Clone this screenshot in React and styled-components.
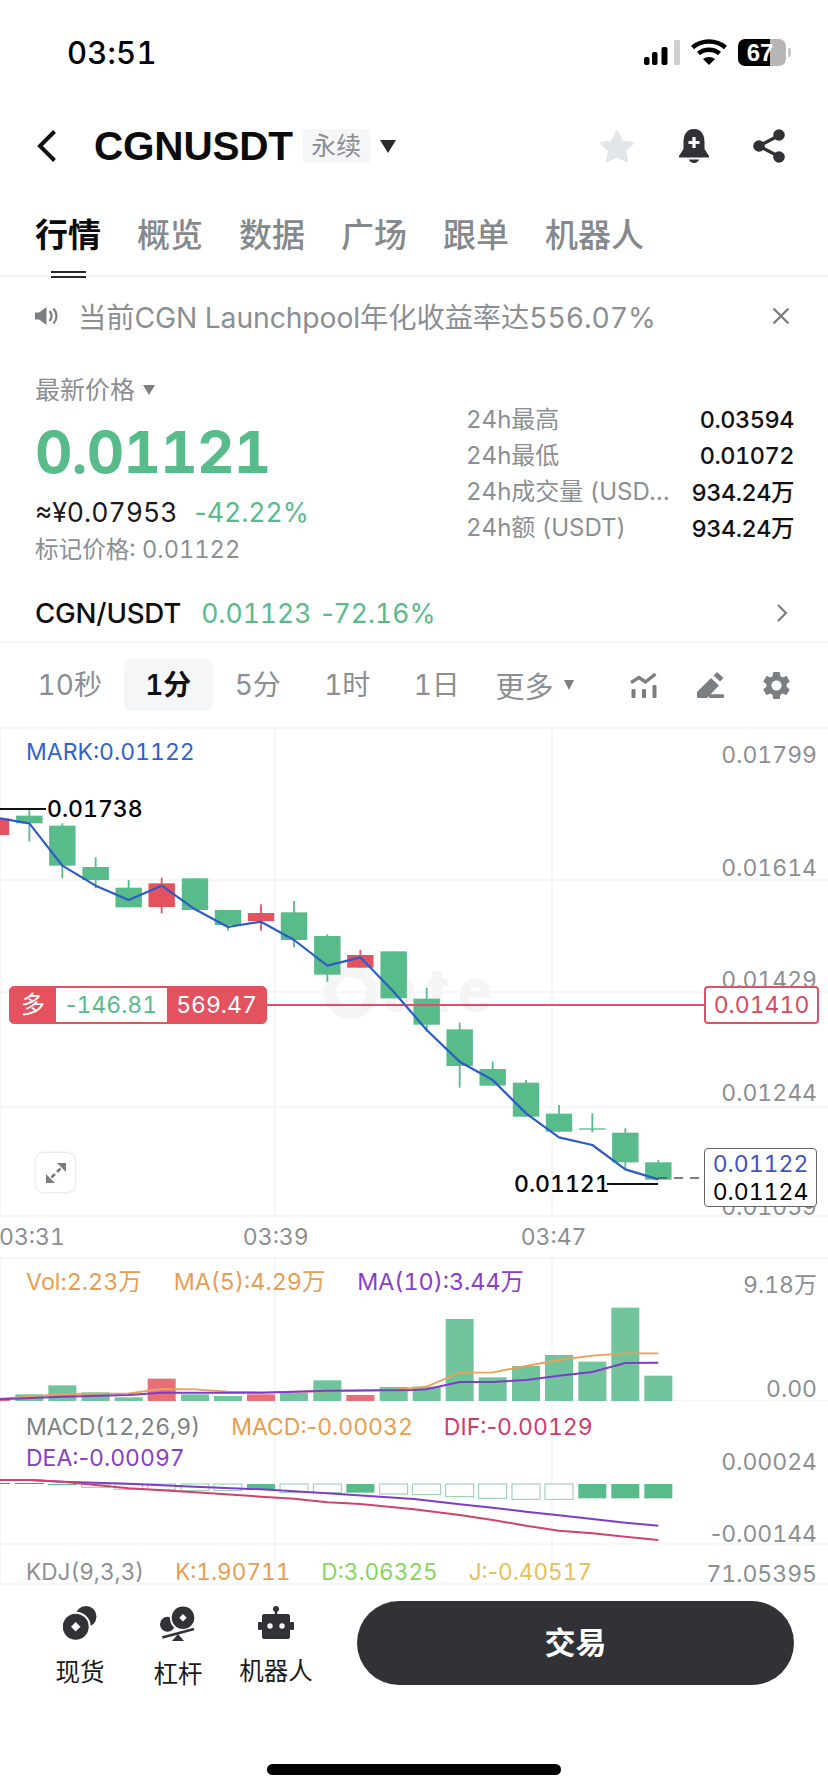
import React from 'react';
import styled, { createGlobalStyle } from 'styled-components';

const GREEN = '#58bb8a';
const RED = '#e5525f';
const BLUE = '#2b5cc9';
const GREY = '#8b8f93';
const ICON = '#7b7f83';
const DARK = '#303236';
const GRID = '#f6f6f6';
const SANS = `Inter, "Noto Sans CJK SC", sans-serif`;
const HELV = `"Liberation Sans", "Noto Sans CJK SC", sans-serif`;

const Global = createGlobalStyle`
  html, body { margin: 0; padding: 0; background: #fff; }
  body { font-family: ${SANS}; color: #000; font-feature-settings: "tnum" 1; }
  * { box-sizing: border-box; }
`;

const Page = styled.div`
  width: 828px; height: 1792px; overflow: hidden; background: #fff;
  display: flex; flex-direction: column;
`;

/* a minus sign keeps its natural width beside tabular digits */
const Neg = styled.span`font-feature-settings: "tnum" 0;`;

/* status bar */
const StatusBar = styled.div`
  height: 105px; padding: 0 42px 1px 67px;
  display: flex; align-items: center; justify-content: space-between;
`;
const Clock = styled.div`
  font-family: ${SANS}; font-size: 31px; font-weight: 500; letter-spacing: 0.2px;
`;
const StatusIcons = styled.div`display: flex; align-items: center; gap: 11px;`;
const Battery = styled.div`
  width: 48px; height: 27px; border-radius: 7px; color: #fff;
  background: linear-gradient(90deg, #000 0 67%, #b6b6b6 67% 100%);
  font-family: ${HELV}; font-weight: 700; font-size: 24px; line-height: 27px; text-align: center; padding-right: 4px; position: relative;
`;
const BatteryNub = styled.span`
  position: absolute; right: -5px; top: 9px; width: 3px; height: 9px; background: #c9c9c9; border-radius: 0 2px 2px 0;
`;

/* header */
const Header = styled.div`
  height: 82px; padding: 0 43px 0 36px; display: flex; align-items: center;
`;
const Symbol = styled.div`
  font-family: ${HELV}; font-weight: 700; font-size: 40.500px; line-height: 1; margin-left: 36px; letter-spacing: -0.2px; color: #0b0b0b;
`;
const Badge = styled.div`
  margin-left: 10px; width: 67px; height: 34px; background: #f5f6f7; border-radius: 3px;
  color: ${GREY}; font-size: 25px; line-height: 34px; text-align: center;
`;
const Caret = styled.span`
  display: inline-block; width: 0; height: 0;
  border-left: ${p => p.$w / 2}px solid transparent; border-right: ${p => p.$w / 2}px solid transparent;
  border-top: ${p => p.$h}px solid ${p => p.$c || ICON}; margin-left: ${p => p.$ml || 0}px;
`;
const HeaderActions = styled.div`margin-left: auto; display: flex; align-items: center; gap: 44px;`;

/* tabs */
const Tabs = styled.div`
  height: 90px; padding: 8px 0 0 35px; display: flex; align-items: center; gap: 36px; position: relative;
  border-bottom: 2px solid #f4f4f4;
`;
const Tab = styled.div`
  font-size: 33px; line-height: 44px; color: ${p => (p.$on ? '#0a0a0a' : '#85898d')};
  font-weight: ${p => (p.$on ? 700 : 500)};
`;
const TabMark = styled.span`
  position: absolute; left: 51px; bottom: -3px; width: 35px; height: 7px;
  border-top: 2px solid #2a2a2a; border-bottom: 2px solid #2a2a2a; background: #fff;
`;

/* notice */
const Notice = styled.div`
  height: 77px; padding: 0 38px 0 35px; display: flex; align-items: center;
  color: ${GREY}; font-size: 28.300px;
`;
const NoticeText = styled.div`margin-left: 20px; flex: 1; white-space: nowrap; letter-spacing: -0.1px;`;
const Close = styled.svg`display: block;`;

/* market */
const Market = styled.div`
  height: 226px; padding: 0 34px 0 35px; display: flex; justify-content: space-between;
`;
const PriceCol = styled.div`padding-top: 18px;`;
const PriceLabel = styled.div`
  font-size: 25px; line-height: 36px; color: ${GREY}; display: flex; align-items: center;
`;
const BigPrice = styled.div`
  font-family: ${SANS}; font-weight: 700; font-size: 58px; line-height: 72px; color: ${GREEN}; margin-top: 8px; letter-spacing: -0.7px;
`;
const Quote = styled.div`
  margin-top: 6px; font-size: 26.600px; line-height: 36px; display: flex; gap: 17px; color: #1a1a1a;
`;
const Up = styled.span`color: ${GREEN};`;
const Mark = styled.div`margin-top: 2px; font-size: 23.600px; line-height: 36px; color: ${GREY};`;
const Stats = styled.div`padding-top: 47px; width: 328px;`;
const StatRow = styled.div`
  height: 36px; display: flex; justify-content: space-between; align-items: center;
  font-size: 24px; white-space: nowrap;
`;
const StatLabel = styled.div`
  color: ${GREY}; max-width: 206px; overflow: hidden; text-overflow: ellipsis; position: relative; top: -2px;
`;
const StatValue = styled.div`color: #111; font-weight: 500; font-size: 23.500px; letter-spacing: -0.5px;`;

/* spot pair */
const PairRow = styled.div`
  height: 63px; padding: 4px 40px 0 35px; display: flex; align-items: center;
  border-bottom: 2px solid #f6f6f6; font-size: 26.500px;
`;
const PairName = styled.div`color: #0c0c0c; font-weight: 500; font-size: 27.700px; letter-spacing: -0.2px;`;
const PairPrice = styled.div`color: ${GREEN}; margin-left: 20px; display: flex; gap: 10px;`;
const Chevron = styled.svg`margin-left: auto; display: block;`;

/* intervals */
const Intervals = styled.div`
  height: 84px; padding: 0 38px 0 25px; display: flex; align-items: center;
`;
const Interval = styled.div`
  width: 89.500px; height: 52px; border-radius: 8px; font-size: 28px; line-height: 52px; text-align: center;
  margin-right: ${p => p.$mr || 0}px; color: ${p => (p.$on ? '#111' : GREY)};
  background: ${p => (p.$on ? '#f5f6f7' : 'transparent')}; font-weight: ${p => (p.$on ? 600 : 400)};
`;
const MoreInterval = styled.div`
  margin-left: 14px; font-size: 29px; color: ${GREY}; display: flex; align-items: center;
`;
const Tools = styled.div`margin-left: auto; display: flex; align-items: center; gap: 39px;`;

/* chart */
const ChartPanel = styled.div`
  position: relative; height: ${p => p.$h}px; flex: none; overflow: hidden;
`;
const Plot = styled.svg`display: block; width: 828px;`;
const TimeAxis = styled.div`
  height: 40px; display: flex; font-size: 23px; line-height: 40px; color: ${GREY};
`;
const TimeLabel = styled.div`margin-left: ${p => p.$ml}px;`;
const Legend = styled.div`
  position: absolute; left: ${p => p.$left || 26}px; top: ${p => p.$top}px; display: flex; flex-wrap: wrap;
  column-gap: ${p => p.$gap || 32}px; row-gap: 1px; font-size: ${p => p.$size || 23.3}px; line-height: 30px; white-space: nowrap;
  max-width: ${p => p.$max || 780}px;
`;
const Tone = styled.span`color: ${p => p.$c};`;
const AxisLabel = styled.div`
  position: absolute; right: 11px; top: ${p => p.$y - 15}px; font-size: 23px; line-height: 30px; color: ${GREY};
`;
const PriceNote = styled.div`
  position: absolute; left: ${p => p.$x}px; top: ${p => p.$y - 15}px; font-size: 23px; line-height: 30px;
  color: ${p => p.$c || '#000'}; font-weight: ${p => p.$w || 500}; white-space: nowrap;
`;
const Position = styled.div`
  position: absolute; left: 9px; top: 259px; width: 258px; height: 38px; border-radius: 5px;
  background: ${RED}; color: #fff; display: flex; font-size: 23px; line-height: 36px; border: 1px solid ${RED};
`;
const Side = styled.div`width: 46px; text-align: center; font-size: 24px;`;
const Pnl = styled.div`
  width: 111px; background: #fff; color: ${GREEN}; text-align: center; margin: 1px 0; line-height: 34px;
`;
const Margin = styled.div`flex: 1; text-align: center;`;
const OrderTag = styled.div`
  position: absolute; left: 704px; top: 259px; width: 115px; height: 38px; border: 2px solid #dd5266; border-radius: 4px;
  background: #fff; color: #d9485f; font-size: 23px; line-height: 34px; text-align: center;
`;
const LastTag = styled.div`
  position: absolute; left: 704px; top: 421px; width: 113px; height: 59px; border: 1.500px solid #666; border-radius: 4px;
  background: #fff; font-size: 23px; line-height: 28px; text-align: center; padding-top: 1px;
`;
const ExpandButton = styled.div`
  position: absolute; left: 36px; top: 426px; width: 39px; height: 39px; border-radius: 8px; background: #fff;
  box-shadow: 0 0 3px rgba(0, 0, 0, 0.22); display: flex; align-items: center; justify-content: center;
`;

/* footer */
const Footer = styled.div`
  flex: 1; padding-top: 16px; display: flex; flex-direction: column; background: #fff; position: relative;
`;
const FooterRow = styled.div`height: 84px; padding: 0 34px 0 31px; display: flex;`;
const Shortcut = styled.div`
  width: 98px; padding-top: 5px; display: flex; flex-direction: column; align-items: center;
`;
const ShortcutIcon = styled.div`height: 36px; display: flex; align-items: center;`;
const ShortcutLabel = styled.div`margin-top: 16px; font-size: 24.500px; line-height: 32px; white-space: nowrap; color: #1a1a1a;`;
const TradeButton = styled.div`
  margin-left: auto; width: 437px; height: 84px; border-radius: 42px; background: ${DARK}; color: #fff;
  font-size: 31px; font-weight: 600; line-height: 84px; text-align: center;
`;
const HomeBar = styled.div`
  margin: 79px auto 0; width: 294px; height: 11px; border-radius: 6px; background: #000;
`;

/* data, in 3x crop coordinates */
const candles = [
  ['r', -12, 295, 345, 295, 345], ['g', 88, 287, 310, 268, 365], ['g', 187, 317, 437, 310, 475],
  ['g', 287, 441, 480, 412, 505], ['g', 386, 503, 562, 480, 562], ['r', 485, 490, 561, 473, 580],
  ['g', 585, 475, 570, 475, 570], ['g', 684, 570, 615, 570, 632], ['r', 783, 579, 603, 553, 632],
  ['g', 882, 577, 660, 543, 682], ['g', 982, 648, 764, 643, 785], ['r', 1081, 705, 743, 690, 743],
  ['g', 1181, 694, 835, 694, 835], ['g', 1280, 836, 914, 803, 935], ['g', 1379, 928, 1038, 908, 1103],
  ['g', 1478, 1047, 1097, 1025, 1097], ['g', 1578, 1088, 1190, 1080, 1190], ['g', 1677, 1181, 1235, 1155, 1235],
  ['g', 1777, 1225, 1229, 1180, 1237], ['g', 1876, 1238, 1327, 1225, 1345], ['g', 1975, 1327, 1379, 1320, 1379],
];
const markLine = [[0,295],[88,310],[187,437],[287,497],[386,540],[485,497],[585,568],[684,621],[783,605],[882,660],[982,737],[1081,712],[1181,815],[1280,930],[1379,1025],[1478,1080],[1578,1180],[1677,1252],[1777,1275],[1876,1348],[1975,1378]];
const volumes = [
  ['r',-12,475],['g',88,463],['g',187,436],['g',287,457],['g',386,472],['r',485,416],['g',585,463],['g',684,468],
  ['r',783,463],['g',882,458],['g',982,421],['r',1081,465],['g',1181,441],['g',1280,440],['g',1379,237],
  ['g',1478,412],['g',1578,378],['g',1677,345],['g',1777,365],['g',1876,203],['g',1975,407],
];
const maFast = [[0,476],[88,470],[187,462],[386,460],[485,447],[585,448],[684,455],[783,457],[1181,450],[1280,440],[1379,398],[1478,397],[1578,378],[1677,360],[1777,347],[1876,340],[1975,340]];
const maSlow = [[0,478],[186,470],[386,465],[485,458],[783,458],[982,452],[1242,450],[1280,448],[1379,426],[1478,426],[1578,420],[1677,407],[1777,396],[1876,369],[1975,368]];
const macd = [
  ['o',287,732,742],['o',386,732,748],['o',485,732,748],['o',585,732,752],['o',684,732,752],
  ['g',783,732,750],['o',882,732,758],['o',982,732,758],['g',1081,732,758],['o',1181,732,762],['o',1280,732,764],
  ['o',1379,732,770],['o',1478,732,775],['o',1578,732,778],['o',1677,732,778],['g',1777,732,775],['g',1876,732,775],['g',1975,732,775],
];
const dea = [[0,720],[90,720],[187,725],[386,731],[585,740],[783,748],[982,760],[1242,777],[1379,793],[1478,803],[1578,815],[1677,826],[1777,837],[1876,848],[1975,857]];
const dif = [[0,720],[90,720],[187,725],[287,735],[386,745],[585,757],[783,770],[882,776],[982,787],[1081,792],[1242,808],[1379,825],[1478,840],[1578,857],[1677,872],[1777,880],[1876,890],[1975,900]];

const pts = (list, base) => list.map(([x, y]) => `${x / 3},${y / 3 + base}`).join(' ');

const VGrid = ({ h }) => (
  <>
    <line x1="275" x2="275" y1="0" y2={h} stroke={GRID} strokeWidth="2" />
    <line x1="552" x2="552" y1="0" y2={h} stroke={GRID} strokeWidth="2" />
    <line x1="0.5" x2="0.5" y1="0" y2={h} stroke={GRID} strokeWidth="1" />
  </>
);

const Signal = () => (
  <svg width="36" height="25" viewBox="0 0 36 25">
    <rect x="0" y="17" width="5.5" height="8" rx="2" fill="#000" />
    <rect x="8" y="12" width="5.5" height="13" rx="2" fill="#000" />
    <rect x="17.5" y="7" width="6" height="18" rx="2" fill="#000" />
    <rect x="30" y="0" width="6" height="25" rx="1" fill="#cfcfcf" />
  </svg>
);
const Wifi = () => (
  <svg width="36" height="26" viewBox="0 0 36 26">
    <path d="M1.5 8.5C11 .5 25 .5 34.5 8.5" fill="none" stroke="#000" strokeWidth="4.6" />
    <path d="M7.5 14.5c6-5 15-5 21 0" fill="none" stroke="#000" strokeWidth="4.6" />
    <path d="M12 20c3.6-2.8 8.4-2.8 12 0l-6 6z" fill="#000" />
  </svg>
);
const Star = () => (
  <svg width="36" height="34" viewBox="0 0 36 34">
    <path d="M18 3l4.6 10 10.9 1.2-8 7.4 2.2 10.4L18 26.7 8.300 32l2.200-10.400-8-7.400L13.400 13z" fill="#e3e6e9" stroke="#e3e6e9" strokeWidth="3" strokeLinejoin="round" />
  </svg>
);
const Bell = () => (
  <svg width="30" height="34" viewBox="0 0 30 34">
    <path d="M15 0C7.500 0 4.500 6 4.500 13v7L0 27v1.500h30V27l-4.500-7v-7C25.500 6 22.500 0 15 0z" fill={DARK} />
    <path d="M15 8v11M9.500 13.500h11" stroke="#fff" strokeWidth="3.2" />
    <path d="M10 30.500h10c-.5 2-2.500 3.500-5 3.500s-4.500-1.500-5-3.500z" fill={DARK} />
  </svg>
);
const Share = () => (
  <svg width="32" height="34" viewBox="0 0 32 34">
    <path d="M26 6.500 6 17l20 10.500" fill="none" stroke={DARK} strokeWidth="3.400" />
    <circle cx="26" cy="6" r="5.800" fill={DARK} /><circle cx="6" cy="17" r="5.800" fill={DARK} /><circle cx="26" cy="28" r="5.800" fill={DARK} />
  </svg>
);
const Speaker = () => (
  <svg width="23" height="18" viewBox="0 0 23 18">
    <path d="M0 5.500h4L11.500 0v18L4 12.500H0z" fill={ICON} />
    <path d="M14.500 4c2.500 3 2.500 7 0 10M18.500 1.500c4 4.500 4 10.500 0 15" fill="none" stroke={ICON} strokeWidth="2.200" />
  </svg>
);
const IndicatorIcon = () => (
  <svg width="28" height="26" viewBox="0 0 28 26">
    <path d="M1 10.500 9 5.500l6.500 4.500 10-8" fill="none" stroke={ICON} strokeWidth="3.400" />
    <rect x="1.500" y="17" width="4" height="9" rx="1" fill={ICON} />
    <rect x="12" y="17" width="4" height="9" rx="1" fill={ICON} />
    <rect x="22.500" y="13" width="4" height="13" rx="1" fill={ICON} />
  </svg>
);
const PencilIcon = () => (
  <svg width="27" height="26" viewBox="0 0 27 26">
    <path d="M0 20 14 6l8 7.500L10 26H1a1 1 0 0 1-1-1z" fill={ICON} />
    <path d="M16.500 3.500 20 0l6.500 6-3.500 3.500z" fill={ICON} />
    <rect x="12" y="22.300" width="15" height="3.700" rx="1" fill={ICON} />
  </svg>
);
const GearIcon = () => (
  <svg width="27" height="27" viewBox="2.400 2.400 19.200 19.200">
    <path fill={ICON} fillRule="evenodd" d="M19.140 12.940c.04-.3.06-.61.06-.94 0-.32-.02-.64-.07-.94l2.030-1.580c.18-.14.23-.41.12-.61l-1.920-3.320c-.12-.22-.37-.29-.59-.22l-2.390.96c-.5-.38-1.030-.7-1.620-.94L14.400 2.810c-.04-.24-.24-.41-.48-.41h-3.840c-.24 0-.43.17-.47.41L9.250 5.350c-.59.24-1.130.57-1.620.94l-2.390-.96c-.22-.08-.47 0-.59.22L2.740 8.870c-.12.21-.08.47.12.61l2.030 1.580c-.05.3-.09.63-.09.94s.02.64.07.94l-2.030 1.580c-.18.14-.23.41-.12.61l1.920 3.320c.12.22.37.29.59.22l2.390-.96c.5.38 1.030.7 1.620.94l.36 2.540c.05.24.24.41.48.41h3.840c.24 0 .44-.17.47-.41l.36-2.540c.59-.24 1.130-.56 1.620-.94l2.390.96c.22.08.47 0 .59-.22l1.920-3.320c.12-.22.07-.47-.12-.61l-2.010-1.580zM12 15.600c-1.980 0-3.600-1.620-3.600-3.600s1.620-3.600 3.600-3.600 3.600 1.620 3.600 3.600-1.620 3.600-3.600 3.600z" />
  </svg>
);
const ExpandIcon = () => (
  <svg width="20" height="20" viewBox="0 0 20 20">
    <path d="M11 0h9v9z" fill={ICON} /><path d="M0 11v9h9z" fill={ICON} />
    <path d="M14.500 5.500 11 9M5.500 14.500 9 11" stroke={ICON} strokeWidth="2.600" />
  </svg>
);
const CoinIcon = () => (
  <svg width="34" height="34" viewBox="0 0 34 34">
    <circle cx="23" cy="10.500" r="10.500" fill={DARK} />
    <circle cx="12.700" cy="20.700" r="15" fill="#fff" />
    <circle cx="12.700" cy="20.700" r="13" fill={DARK} />
    <path d="M12.700 16l4.700 4.700-4.700 4.700L8 20.700z" fill="#fff" />
  </svg>
);
const LeverIcon = () => (
  <svg width="36" height="36" viewBox="0 0 36 36">
    <circle cx="7.500" cy="18.300" r="7.500" fill={DARK} />
    <circle cx="23" cy="11.700" r="13.200" fill="#fff" />
    <circle cx="23" cy="11.700" r="11.300" fill={DARK} />
    <path d="M23 8l3.700 3.700L23 15.400l-3.700-3.700z" fill="#fff" />
    <path d="M2.300 31.500 34 23" stroke={DARK} strokeWidth="2.800" />
    <path d="M18 28l6 7H12z" fill={DARK} />
  </svg>
);
const RobotIcon = () => (
  <svg width="36" height="33" viewBox="0 0 36 33">
    <circle cx="18" cy="3" r="3" fill={DARK} />
    <rect x="16.800" y="3" width="2.400" height="6" fill={DARK} />
    <rect x="4" y="8" width="28" height="25" rx="2" fill={DARK} />
    <rect x="0" y="16" width="4" height="8" rx="1" fill={DARK} />
    <rect x="32" y="16" width="4" height="8" rx="1" fill={DARK} />
    <circle cx="12" cy="20" r="2.700" fill="#fff" /><circle cx="24" cy="20" r="2.700" fill="#fff" />
  </svg>
);

const PriceChart = () => (
  <Plot height="490" viewBox="0 0 828 490">
    <line x1="0" x2="828" y1="1" y2="1" stroke={GRID} strokeWidth="2" />
    <line x1="0" x2="828" y1="153" y2="153" stroke={GRID} strokeWidth="2" />
    <line x1="0" x2="828" y1="265" y2="265" stroke={GRID} strokeWidth="2" />
    <line x1="0" x2="828" y1="380" y2="380" stroke={GRID} strokeWidth="2" />
    <line x1="0" x2="828" y1="489" y2="489" stroke={GRID} strokeWidth="2" />
    <VGrid h={490} />
    <circle cx="351" cy="265" r="21" fill="none" stroke="#f5f5f5" strokeWidth="12" />
    <text x="384" y="284" fontFamily="Inter" fontWeight="800" fontSize="58" fill="#f5f5f5" letterSpacing="9">ate</text>
    {candles.map(([c, x, t, b, wt, wb]) => {
      const col = c === 'g' ? GREEN : RED;
      return (
        <g key={x} fill={col}>
          <rect x={x / 3 - 0.9} y={wt / 3 - 7} width="1.8" height={(wb - wt) / 3} />
          <rect x={x / 3 - 13.2} y={t / 3 - 7} width="26.400" height={(b - t) / 3} />
        </g>
      );
    })}
    <line x1="0" x2="46" y1="82" y2="82" stroke="#111" strokeWidth="2" />
    <line x1="607" x2="658" y1="457" y2="457" stroke="#111" strokeWidth="2" />
    <line x1="267" x2="704" y1="278" y2="278" stroke="#df5068" strokeWidth="2" />
    <line x1="658" x2="704" y1="451" y2="451" stroke="#555" strokeWidth="1.500" strokeDasharray="9 7" />
    <polyline points={pts(markLine, -7)} fill="none" stroke={BLUE} strokeWidth="2.200" strokeLinejoin="round" />
  </Plot>
);

const VolumeChart = () => (
  <Plot height="144" viewBox="0 0 828 144">
    <line x1="0" x2="828" y1="1" y2="1" stroke={GRID} strokeWidth="2" />
    <line x1="0" x2="828" y1="144" y2="144" stroke={GRID} strokeWidth="2" />
    <VGrid h={144} />
    {volumes.map(([c, x, t]) => (
      <rect key={x} x={x / 3 - 14} y={t / 3 - 17} width="28" height={(483 - t) / 3}
        fill={c === 'g' ? '#71c49c' : '#e86e78'} />
    ))}
    <polyline points={pts(maFast, -17)} fill="none" stroke="#ec9f59" strokeWidth="1.800" />
    <polyline points={pts(maSlow, -17)} fill="none" stroke="#7d3cc9" strokeWidth="2" />
  </Plot>
);

const MacdChart = () => (
  <Plot height="144" viewBox="0 0 828 144">
    <line x1="0" x2="828" y1="143" y2="143" stroke={GRID} strokeWidth="2" />
    <VGrid h={144} />
    <line x1="0" x2="10" y1="82.500" y2="82.500" stroke={RED} strokeWidth="1" />
    <line x1="15" x2="44" y1="82.500" y2="82.500" stroke={RED} strokeWidth="1" />
    <line x1="48" x2="77" y1="83.500" y2="83.500" stroke={GREEN} strokeWidth="1" />
    {macd.map(([c, x, t, b]) => (
      <rect key={x} x={x / 3 - 14} y={t / 3 - 161} width="28" height={(b - t) / 3}
        fill={c === 'g' ? GREEN : '#fff'} stroke={c === 'g' ? 'none' : '#8fcbad'} strokeWidth="1" />
    ))}
    <polyline points={pts(dea, -161)} fill="none" stroke="#7d3cc9" strokeWidth="2" />
    <polyline points={pts(dif, -161)} fill="none" stroke="#d3406c" strokeWidth="2" />
  </Plot>
);

const KdjChart = () => (
  <Plot height="40" viewBox="0 0 828 40">
    <VGrid h={40} />
    <line x1="0" x2="828" y1="39" y2="39" stroke={GRID} strokeWidth="2" />
  </Plot>
);

export default function App() {
  return (
    <Page>
      <Global />
      <StatusBar>
        <Clock>03:51</Clock>
        <StatusIcons>
          <Signal />
          <Wifi />
          <Battery>67<BatteryNub /></Battery>
        </StatusIcons>
      </StatusBar>

      <Header>
        <svg width="22" height="34" viewBox="0 0 22 34">
          <path d="M18.500 2.500 4 17l14.500 14.500" fill="none" stroke="#111" strokeWidth="4" />
        </svg>
        <Symbol>CGNUSDT</Symbol>
        <Badge>永续</Badge>
        <Caret $w={16} $h={13} $c="#2a2a2a" $ml={10} />
        <HeaderActions>
          <Star />
          <Bell />
          <Share />
        </HeaderActions>
      </Header>

      <Tabs>
        <Tab $on>行情</Tab>
        <Tab>概览</Tab>
        <Tab>数据</Tab>
        <Tab>广场</Tab>
        <Tab>跟单</Tab>
        <Tab>机器人</Tab>
        <TabMark />
      </Tabs>

      <Notice>
        <Speaker />
        <NoticeText>当前CGN Launchpool年化收益率达556.07%</NoticeText>
        <Close width="18" height="18" viewBox="0 0 18 18">
          <path d="M1.500 1.500l15 15M16.500 1.500l-15 15" stroke={ICON} strokeWidth="2.400" />
        </Close>
      </Notice>

      <Market>
        <PriceCol>
          <PriceLabel>最新价格<Caret $w={12} $h={10} $ml={8} /></PriceLabel>
          <BigPrice>0.01121</BigPrice>
          <Quote><span>≈¥0.07953</span><Up><Neg>-</Neg>42.22%</Up></Quote>
          <Mark>标记价格: 0.01122</Mark>
        </PriceCol>
        <Stats>
          <StatRow><StatLabel>24h最高</StatLabel><StatValue>0.03594</StatValue></StatRow>
          <StatRow><StatLabel>24h最低</StatLabel><StatValue>0.01072</StatValue></StatRow>
          <StatRow><StatLabel>24h成交量 (USDT)</StatLabel><StatValue>934.24万</StatValue></StatRow>
          <StatRow><StatLabel>24h额 (USDT)</StatLabel><StatValue>934.24万</StatValue></StatRow>
        </Stats>
      </Market>

      <PairRow>
        <PairName>CGN/USDT</PairName>
        <PairPrice><span>0.01123</span><span><Neg>-</Neg>72.16%</span></PairPrice>
        <Chevron width="12" height="20" viewBox="0 0 12 20">
          <path d="M2 2l8 8-8 8" fill="none" stroke={ICON} strokeWidth="2.200" />
        </Chevron>
      </PairRow>

      <Intervals>
        <Interval $mr={9}>10秒</Interval>
        <Interval $on>1分</Interval>
        <Interval>5分</Interval>
        <Interval>1时</Interval>
        <Interval>1日</Interval>
        <MoreInterval>更多<Caret $w={11} $h={10} $ml={10} /></MoreInterval>
        <Tools>
          <IndicatorIcon />
          <PencilIcon />
          <GearIcon />
        </Tools>
      </Intervals>

      <ChartPanel $h={490}>
        <PriceChart />
        <PriceNote $x={26} $y={25} $c="#2f62cf" $w={400}>MARK:0.01122</PriceNote>
        <PriceNote $x={47} $y={82}>0.01738</PriceNote>
        <AxisLabel $y={28}>0.01799</AxisLabel>
        <AxisLabel $y={141}>0.01614</AxisLabel>
        <AxisLabel $y={253}>0.01429</AxisLabel>
        <AxisLabel $y={366}>0.01244</AxisLabel>
        <AxisLabel $y={480}>0.01059</AxisLabel>
        <Position><Side>多</Side><Pnl><Neg>-</Neg>146.81</Pnl><Margin>569.47</Margin></Position>
        <OrderTag>0.01410</OrderTag>
        <PriceNote $x={514} $y={457}>0.01121</PriceNote>
        <LastTag><Tone $c="#3b55c4">0.01122</Tone><br />0.01124</LastTag>
        <ExpandButton><ExpandIcon /></ExpandButton>
      </ChartPanel>

      <TimeAxis>
        <TimeLabel $ml={-1}>03:31</TimeLabel>
        <TimeLabel $ml={178}>03:39</TimeLabel>
        <TimeLabel $ml={212}>03:47</TimeLabel>
      </TimeAxis>

      <ChartPanel $h={144}>
        <VolumeChart />
        <Legend $top={10}>
          <Tone $c="#e89d52">Vol:2.23万</Tone>
          <Tone $c="#e89d52">MA(5):4.29万</Tone>
          <Tone $c="#8a3dc9">MA(10):3.44万</Tone>
        </Legend>
        <AxisLabel $y={28}>9.18万</AxisLabel>
        <AxisLabel $y={132}>0.00</AxisLabel>
      </ChartPanel>

      <ChartPanel $h={144}>
        <MacdChart />
        <Legend $top={11} $max={620} $size={23} $gap={31}>
          <Tone $c="#7d8185">MACD(12,26,9)</Tone>
          <Tone $c="#e89d52">MACD:<Neg>-</Neg>0.00032</Tone>
          <Tone $c="#cf3a6e">DIF:<Neg>-</Neg>0.00129</Tone>
          <Tone $c="#8a3dc9">DEA:<Neg>-</Neg>0.00097</Tone>
        </Legend>
        <AxisLabel $y={61}>0.00024</AxisLabel>
        <AxisLabel $y={133}><Neg>-</Neg>0.00144</AxisLabel>
      </ChartPanel>

      <ChartPanel $h={40}>
        <KdjChart />
        <Legend $top={12} $size={22.6} $gap={31}>
          <Tone $c="#8b8f93">KDJ(9,3,3)</Tone>
          <Tone $c="#e89d52">K:1.90711</Tone>
          <Tone $c="#84d65b">D:3.06325</Tone>
          <Tone $c="#e8bf55">J:<Neg>-</Neg>0.40517</Tone>
        </Legend>
        <AxisLabel $y={29}>71.05395</AxisLabel>
      </ChartPanel>

      <Footer>
        <FooterRow>
          <Shortcut><ShortcutIcon><CoinIcon /></ShortcutIcon><ShortcutLabel>现货</ShortcutLabel></Shortcut>
          <Shortcut><ShortcutIcon><LeverIcon /></ShortcutIcon><ShortcutLabel>杠杆</ShortcutLabel></Shortcut>
          <Shortcut><ShortcutIcon><RobotIcon /></ShortcutIcon><ShortcutLabel>机器人</ShortcutLabel></Shortcut>
          <TradeButton>交易</TradeButton>
        </FooterRow>
        <HomeBar />
      </Footer>
    </Page>
  );
}
